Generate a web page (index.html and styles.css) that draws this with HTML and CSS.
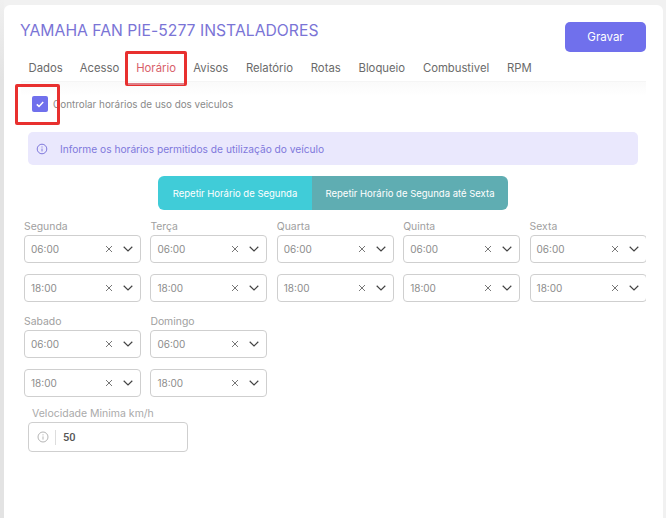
FILE: index.html
```html
<!DOCTYPE html>
<html lang="en">
<head>
<meta charset="UTF-8">
<title>Horário</title>
<link rel="stylesheet" href="styles.css">
</head>
<body>
<div class="card">
    <div class="header">
        <h1 class="title">YAMAHA FAN PIE-5277 INSTALADORES</h1>
        <button class="save-btn">Gravar</button>
    </div>

    <div class="tabs">
        <span class="tab">Dados</span>
        <span class="tab">Acesso</span>
        <span class="tab active">Horário</span>
        <span class="tab">Avisos</span>
        <span class="tab">Relatório</span>
        <span class="tab">Rotas</span>
        <span class="tab">Bloqueio</span>
        <span class="tab">Combustivel</span>
        <span class="tab">RPM</span>
    </div>

    <div class="check-row">
        <span class="checkbox">
            <svg width="10" height="10" viewBox="0 0 10 10"><path d="M1.8 5.4 L4 7.4 L8.2 3" fill="none" stroke="#fff" stroke-width="1.5"/></svg>
        </span>
        <span class="check-label">Controlar horários de uso dos veiculos</span>
    </div>

    <div class="alert">
        <svg class="alert-icon" width="12" height="12" viewBox="0 0 12 12"><circle cx="6" cy="6" r="4.8" fill="none" stroke="#7f78dc" stroke-width="1"/><path d="M6 5.6 V8.4 M6 3.5 V4.5" stroke="#7f78dc" stroke-width="1"/></svg>
        <span>Informe os horários permitidos de utilização do veículo</span>
    </div>

    <div class="repeat-group">
        <button class="repeat-btn first">Repetir Horário de Segunda</button>
        <button class="repeat-btn second">Repetir Horário de Segunda até Sexta</button>
    </div>

    <div class="days" id="days"></div>

    <div class="speed">
        <label class="speed-label">Velocidade Minima km/h</label>
        <div class="speed-input">
            <svg width="12" height="12" viewBox="0 0 12 12"><circle cx="6" cy="6" r="5" fill="none" stroke="#b5b5b5" stroke-width="1"/><path d="M6 5.4 V8.6 M6 3.3 V4.4" stroke="#b5b5b5" stroke-width="1"/></svg>
            <span class="speed-divider"></span>
            <span class="speed-value">50</span>
        </div>
    </div>
</div>

<script>
    var dayNames = ['Segunda', 'Terça', 'Quarta', 'Quinta', 'Sexta', 'Sabado', 'Domingo'];

    function timeSelect(value) {
        return '<div class="select"><span class="select-value">' + value + '</span>' +
            '<svg class="select-x" width="8" height="8" viewBox="0 0 8 8"><path d="M1 1 L7 7 M7 1 L1 7" stroke="#777" stroke-width="1"/></svg>' +
            '<svg class="select-arrow" width="10" height="6" viewBox="0 0 10 6"><path d="M.7 .8 L5 5 L9.3 .8" fill="none" stroke="#444" stroke-width="1.2"/></svg>' +
            '</div>';
    }

    document.getElementById('days').innerHTML = dayNames.map(function(name) {
        return '<div class="day"><div class="day-label">' + name + '</div>' +
            timeSelect('06:00') + timeSelect('18:00') + '</div>';
    }).join('');
</script>
</body>
</html>
```

FILE: styles.css
```css
* {
    box-sizing: border-box;
}
body {
    margin: 0;
    padding: 5px 3px 0 4px;
    height: 518px;
    overflow: hidden;
    background: linear-gradient(#f0f0f0, #e3e3e3 80px) no-repeat 0 0 / 4px 100%, #f1f1f1;
    font-family: Inter, "Open Sans", sans-serif;
    color: #666;
}
.card {
    height: 520px;
    padding: 17px 17px 0 17px;
    background-color: #fff;
    border-radius: 6px;
}
.header {
    display: flex;
    justify-content: space-between;
    align-items: flex-start;
    height: 30px;
}
.title {
    margin: 0 0 0 -1px;
    font-size: 15.7px;
    line-height: 17px;
    font-weight: 400;
    letter-spacing: .02px;
    color: #7a74d6;
}
.save-btn {
    width: 81px;
    height: 30px;
    border: none;
    border-radius: 5px;
    background-color: #7070ec;
    color: #fff;
    font-family: inherit;
    font-size: 11.5px;
}
.tabs {
    display: flex;
    height: 30px;
    padding-top: 2px;
    align-items: center;
    background: linear-gradient(#fff 29px, #f5f5f5 29px);
}
.tab {
    padding: 0 8.5px;
    font-size: 11.3px;
    line-height: 14px;
    color: #6a6a6a;
    position: relative;
}
.tab:first-child {
    margin-left: -1px;
}
.tab.active ~ .tab {
    padding: 0 8.9px;
}
.tab.active {
    color: #d8606a;
}
/* red annotation round the tab */
.tab.active::before {
    content: '';
    position: absolute;
    left: -3px;
    right: -3px;
    top: -10px;
    height: 29px;
    border: 3px solid #e8302f;
    border-radius: 2px;
}
.tab.active::after {
    content: '';
    position: absolute;
    left: 0;
    right: 0;
    top: 22px;
    height: 2px;
    background-color: #de8089;
}
.check-row {
    display: flex;
    align-items: flex-start;
    height: 37px;
    padding: 14px 0 0 11px;
    background: linear-gradient(#fafafa, #fff 14px);
}
.checkbox {
    position: relative;
    display: flex;
    align-items: center;
    justify-content: center;
    width: 16px;
    height: 16px;
    margin-right: 5px;
    border-radius: 2px;
    background-color: #7070ec;
}
.checkbox::before {
    content: '';
    position: absolute;
    left: -17px;
    top: -12px;
    width: 39px;
    height: 35px;
    border: 3px solid #e8302f;
    border-radius: 2px;
}
.check-label {
    font-size: 9.9px;
    line-height: 16px;
    color: #8a8a8a;
}
.alert {
    display: flex;
    align-items: center;
    height: 33px;
    margin: 13px 8px 0 7px;
    padding-left: 8px;
    border-radius: 5px;
    background-color: #eae8fd;
    font-size: 10.2px;
    color: #7f78dc;
}
.alert-icon {
    margin-right: 12px;
}
.repeat-group {
    display: flex;
    justify-content: center;
    margin: 11px 0 0 -1px;
}
.repeat-btn {
    height: 34px;
    border: none;
    color: #fff;
    font-family: inherit;
    font-size: 9.5px;
}
.repeat-btn.first {
    width: 154px;
    border-radius: 6px 0 0 6px;
    background-color: #40ccd8;
}
.repeat-btn.second {
    width: 196px;
    border-radius: 0 6px 6px 0;
    background-color: #5fadb2;
}
.days {
    display: grid;
    grid-template-columns: repeat(5, 117px);
    column-gap: 9.4px;
    row-gap: 1px;
    margin: 9px 0 0 3px;
    width: 622px;
    overflow: hidden;
}
.day-label {
    height: 16px;
    font-size: 10.4px;
    line-height: 15px;
    color: #a0a0a0;
}
.select {
    display: flex;
    align-items: center;
    height: 28px;
    margin-bottom: 11px;
    padding: 0 7px 0 6px;
    border: 1px solid #cfcfcf;
    border-radius: 4px;
    font-size: 10px;
    color: #8c8c8c;
}
.select-value {
    flex: 1;
}
.select-x {
    margin-right: 10px;
}
.speed {
    margin: -2px 0 0 7px;
    width: 160px;
}
.speed-label {
    display: block;
    height: 16px;
    padding-left: 4px;
    font-size: 10.5px;
    line-height: 15px;
    color: #aaa;
}
.speed-input {
    display: flex;
    align-items: center;
    height: 30px;
    padding-left: 8px;
    border: 1px solid #cfcfcf;
    border-radius: 4px;
}
.speed-divider {
    width: 1px;
    height: 15px;
    margin: 0 7px 0 6px;
    background-color: #ddd;
}
.speed-value {
    font-family: Roboto, sans-serif;
    font-size: 11px;
    font-weight: 500;
    color: #555;
}
```
